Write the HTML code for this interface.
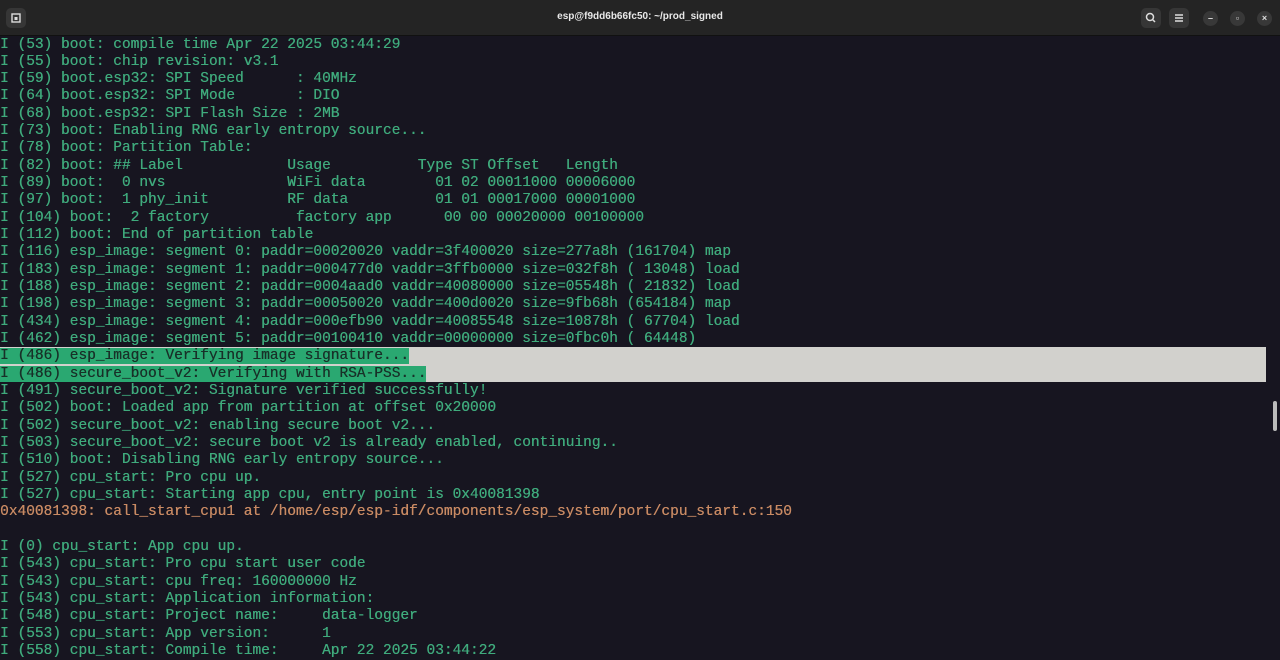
<!DOCTYPE html>
<html><head><style>
body{margin:0;width:1280px;height:654px;overflow:hidden;background:#171520;font-family:"DejaVu Sans Mono","Liberation Mono",monospace;}
.bar{position:absolute;left:0;top:0;width:1280px;height:35px;background:#242424;border-bottom:1px solid #111;}
.title{position:absolute;left:0;width:1280px;top:11px;text-align:center;color:#e8e8e8;font:bold 10px "Liberation Sans",sans-serif;}
.btn{position:absolute;top:8px;width:20px;height:20px;border-radius:5px;background:#363636;}
.circ{position:absolute;top:11px;width:15px;height:15px;border-radius:50%;background:#383838;color:#ddd;font:bold 9px "Liberation Sans",sans-serif;text-align:center;line-height:15px;}
pre{position:absolute;left:0;top:36.5px;margin:0;font-size:14.5px;line-height:17.33px;color:#3faa7c;white-space:pre;text-shadow:0.3px 0 0 currentColor;}
.o{color:#c98a63}
.hl{background:#2aa871;color:#183028}
.g{position:absolute;left:0;top:347px;width:1266px;height:35px;background:#d2d1cd;}
</style></head><body>
<div class="bar">
<div class="btn" style="left:6px"><svg width="20" height="20"><rect x="6" y="6" width="8" height="8" fill="none" stroke="#ddd" stroke-width="1.4"/><rect x="8.5" y="9" width="3" height="3" fill="#ddd"/></svg></div>
<div class="title">esp@f9dd6b66fc50: ~/prod_signed</div>
<div class="btn" style="left:1141px"><svg width="20" height="20"><circle cx="9" cy="9" r="3.5" fill="none" stroke="#ddd" stroke-width="1.5"/><line x1="11.5" y1="11.5" x2="14" y2="14" stroke="#ddd" stroke-width="1.5"/></svg></div>
<div class="btn" style="left:1169px"><svg width="20" height="20"><path d="M6 7h8M6 10h8M6 13h8" stroke="#ddd" stroke-width="1.4"/></svg></div>
<div class="circ" style="left:1203px">–</div>
<div class="circ" style="left:1230px">▫</div>
<div class="circ" style="left:1257px">×</div>
</div>
<div class="g"></div>
<pre>I (53) boot: compile time Apr 22 2025 03:44:29
I (55) boot: chip revision: v3.1
I (59) boot.esp32: SPI Speed      : 40MHz
I (64) boot.esp32: SPI Mode       : DIO
I (68) boot.esp32: SPI Flash Size : 2MB
I (73) boot: Enabling RNG early entropy source...
I (78) boot: Partition Table:
I (82) boot: ## Label            Usage          Type ST Offset   Length
I (89) boot:  0 nvs              WiFi data        01 02 00011000 00006000
I (97) boot:  1 phy_init         RF data          01 01 00017000 00001000
I (104) boot:  2 factory          factory app      00 00 00020000 00100000
I (112) boot: End of partition table
I (116) esp_image: segment 0: paddr=00020020 vaddr=3f400020 size=277a8h (161704) map
I (183) esp_image: segment 1: paddr=000477d0 vaddr=3ffb0000 size=032f8h ( 13048) load
I (188) esp_image: segment 2: paddr=0004aad0 vaddr=40080000 size=05548h ( 21832) load
I (198) esp_image: segment 3: paddr=00050020 vaddr=400d0020 size=9fb68h (654184) map
I (434) esp_image: segment 4: paddr=000efb90 vaddr=40085548 size=10878h ( 67704) load
I (462) esp_image: segment 5: paddr=00100410 vaddr=00000000 size=0fbc0h ( 64448)
<span class="hl">I (486) esp_image: Verifying image signature...</span>
<span class="hl">I (486) secure_boot_v2: Verifying with RSA-PSS...</span>
I (491) secure_boot_v2: Signature verified successfully!
I (502) boot: Loaded app from partition at offset 0x20000
I (502) secure_boot_v2: enabling secure boot v2...
I (503) secure_boot_v2: secure boot v2 is already enabled, continuing..
I (510) boot: Disabling RNG early entropy source...
I (527) cpu_start: Pro cpu up.
I (527) cpu_start: Starting app cpu, entry point is 0x40081398
<span class="o">0x40081398: call_start_cpu1 at /home/esp/esp-idf/components/esp_system/port/cpu_start.c:150</span>

I (0) cpu_start: App cpu up.
I (543) cpu_start: Pro cpu start user code
I (543) cpu_start: cpu freq: 160000000 Hz
I (543) cpu_start: Application information:
I (548) cpu_start: Project name:     data-logger
I (553) cpu_start: App version:      1
I (558) cpu_start: Compile time:     Apr 22 2025 03:44:22</pre>
<div style="position:absolute;left:1273px;top:401px;width:4px;height:30px;border-radius:2px;background:#bbb"></div>
</body></html>
